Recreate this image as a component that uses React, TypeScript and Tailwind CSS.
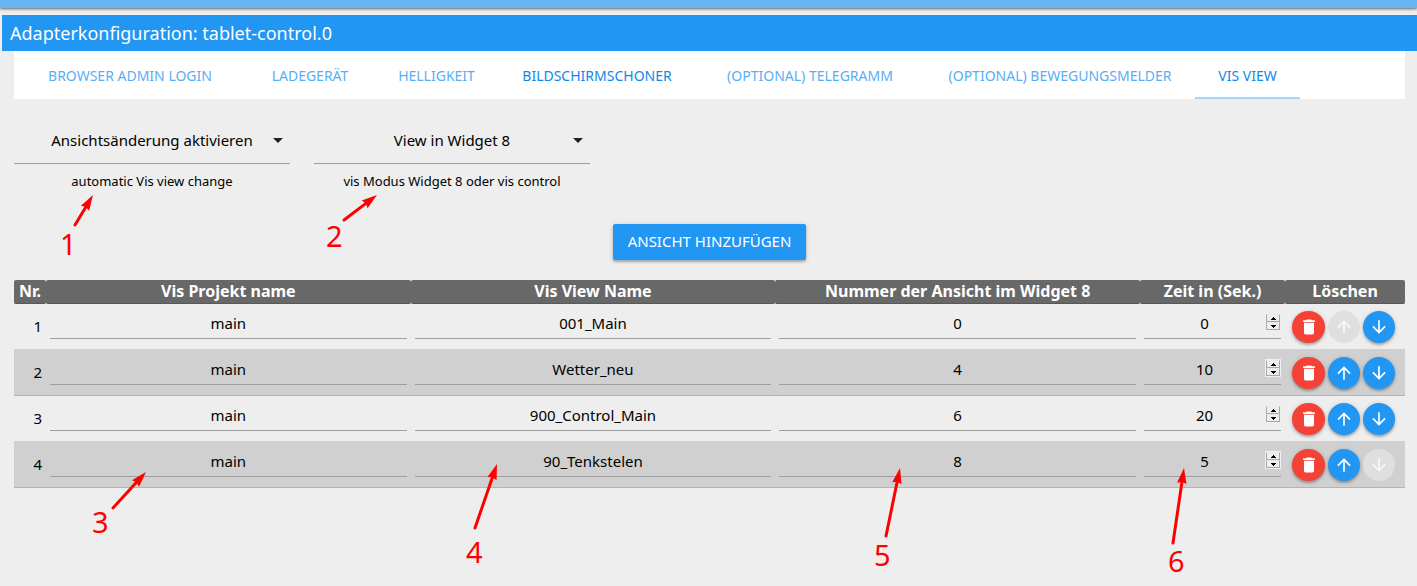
import React, { useState } from "react";

type Row = { id: number; project: string; view: string; widget: string; time: string };

const initialRows: Row[] = [
  { id: 1, project: "main", view: "001_Main", widget: "0", time: "0" },
  { id: 2, project: "main", view: "Wetter_neu", widget: "4", time: "10" },
  { id: 3, project: "main", view: "900_Control_Main", widget: "6", time: "20" },
  { id: 4, project: "main", view: "90_Tenkstelen", widget: "8", time: "5" },
];

const tabs = [
  { label: "Browser Admin Login", strong: false },
  { label: "Ladegerät", strong: false },
  { label: "Helligkeit", strong: false },
  { label: "Bildschirmschoner", strong: true },
  { label: "(optional) Telegramm", strong: false },
  { label: "(optional) Bewegungsmelder", strong: false },
  { label: "Vis View", strong: true },
];

const headings = ["Nr.", "Vis Projekt name", "Vis View Name", "Nummer der Ansicht im Widget 8", "Zeit in (Sek.)", "Löschen"];

const notes = [
  { n: "1", place: "left-[60px] top-[229px]", from: [75, 225], to: [93, 195] },
  { n: "2", place: "left-[326px] top-[221px]", from: [344, 220], to: [377, 195] },
  { n: "3", place: "left-[92px] top-[507px]", from: [113, 508], to: [146, 472] },
  { n: "4", place: "left-[466px] top-[537px]", from: [475, 528], to: [497, 464] },
  { n: "5", place: "left-[874px] top-[540px]", from: [886, 536], to: [900, 468] },
  { n: "6", place: "left-[1168px] top-[546px]", from: [1173, 543], to: [1184, 468] },
];

function Arrow({ from, to }: { from: number[]; to: number[] }) {
  const dx = to[0] - from[0];
  const dy = to[1] - from[1];
  const length = Math.hypot(dx, dy);
  const angle = (Math.atan2(dy, dx) * 180) / Math.PI;
  return (
    <g transform={`translate(${from[0]} ${from[1]}) rotate(${angle})`}>
      <path d={`M0 0H${length - 11}`} stroke="#ff0000" strokeWidth="3" strokeLinecap="round" />
      <path d={`M${length} 0l-15.5 -4.8l1.5 4.8l-1.5 4.8z`} fill="#ff0000" />
    </g>
  );
}

function SelectField({ id, value, other, label }: { id: string; value: string; other: string; label: string }) {
  return (
    <div className="w-[276px]">
      <div className="relative">
        <select
          id={id}
          className="block h-[46px] w-full appearance-none border-b border-[#9e9e9e] bg-transparent text-center text-[15px] text-black outline-none [text-align-last:center]"
        >
          <option>{value}</option>
          <option>{other}</option>
        </select>
        <svg className="pointer-events-none absolute right-0 top-[10px] size-6" viewBox="0 0 24 24" fill="#212121">
          <path d="M7 10l5 5 5-5z" />
        </svg>
      </div>
      <label htmlFor={id} className="mt-2 block text-center text-[13px] leading-[18px] text-black">
        {label}
      </label>
    </div>
  );
}

function TextCell({ label, value }: { label: string; value: string }) {
  return (
    <td className="px-1 pt-2 align-top">
      <input
        aria-label={label}
        defaultValue={value}
        className="block h-[27px] w-full border-b border-[#9e9e9e] bg-transparent pb-1 text-center text-[15px] text-black outline-none"
      />
    </td>
  );
}

function StepButton({ up, onClick }: { up?: boolean; onClick: () => void }) {
  return (
    <button
      type="button"
      aria-label={up ? "Wert erhöhen" : "Wert verringern"}
      onClick={onClick}
      className="flex h-2 w-full items-center justify-center border border-[#a8a8a8] border-t-[#e8e8e8] bg-[#eeeeee]"
    >
      <svg className="h-[3px] w-[5px] shrink-0" viewBox="0 0 5 3" fill="#000" shapeRendering="crispEdges">
        <path d={up ? "M2 0h1v1h1v1h1v1H0V2h1V1h1z" : "M0 0h5v1H4v1H3v1H2V2H1V1H0z"} />
      </svg>
    </button>
  );
}

function NumberCell({ value }: { value: string }) {
  const [v, setV] = useState(value);
  return (
    <td className="px-1 pt-2 align-top">
      <div className="flex h-[27px] border-b border-[#9e9e9e]">
        <input
          type="number"
          aria-label="Zeit in (Sek.)"
          value={v}
          onChange={(e) => setV(e.target.value)}
          className="min-w-0 flex-1 appearance-none bg-transparent pb-1 text-center text-[15px] text-black outline-none [-moz-appearance:textfield] [&::-webkit-inner-spin-button]:appearance-none [&::-webkit-outer-spin-button]:appearance-none"
        />
        <span className="mt-px flex h-[18px] w-4 flex-col bg-[#f0f0f0] p-px">
          <StepButton up onClick={() => setV(String(Number(v) + 1))} />
          <StepButton onClick={() => setV(String(Number(v) - 1))} />
        </span>
      </div>
    </td>
  );
}

const paths = {
  trash: "M6 19c0 1.1.9 2 2 2h8c1.1 0 2-.9 2-2V7H6v12zM19 4h-3.5l-1-1h-5l-1 1H5v2h14V4z",
  up: "M4 12l1.41 1.41L11 7.83V20h2V7.83l5.58 5.59L20 12l-8-8-8 8z",
  down: "M20 12l-1.41-1.41L13 16.17V4h-2v12.17l-5.58-5.59L4 12l8 8 8-8z",
};

function RoundButton({ icon, label, disabled, onClick }: { icon: keyof typeof paths; label: string; disabled?: boolean; onClick: () => void }) {
  const tone = disabled
    ? "w-8 bg-[#dfdfdf]"
    : icon === "trash"
      ? "w-[33px] bg-[#f44336] shadow-[0_2px_2px_rgba(0,0,0,0.2),0_1px_5px_rgba(0,0,0,0.18)]"
      : "w-8 bg-[#2196f3] shadow-[0_2px_2px_rgba(0,0,0,0.2),0_1px_5px_rgba(0,0,0,0.18)]";
  return (
    <button type="button" aria-label={label} disabled={disabled} onClick={onClick} className={`flex h-8 items-center justify-center rounded-full ${tone}`}>
      <svg className="size-5" viewBox="0 0 24 24" fill={disabled ? "#f8f8f8" : "#ffffff"}>
        <path d={paths[icon]} />
      </svg>
    </button>
  );
}

export default function App() {
  const [rows, setRows] = useState(initialRows);
  const move = (i: number, d: number) => {
    const next = [...rows];
    [next[i], next[i + d]] = [next[i + d], next[i]];
    setRows(next);
  };

  return (
    <div className="relative min-h-screen overflow-hidden bg-[#eeeeee] font-['Noto_Sans',sans-serif] text-black">
      <div className="h-2 bg-[#64b5f6] shadow-[0_1px_3px_rgba(0,0,0,0.6)]" />
      <header className="ml-[2px] mt-[7px] flex h-9 items-center bg-[#2196f3] pl-2">
        <h1 className="text-[18px] text-white">Adapterkonfiguration: tablet-control.0</h1>
      </header>

      <main className="ml-[14px] mr-3">
        <nav className="grid h-12 grid-cols-[232fr_128fr_125fr_196fr_230fr_270fr_105fr_105fr] bg-white">
          {tabs.map((t, i) => (
            <a
              key={t.label}
              href={`#tab-${i}`}
              className={`flex items-center justify-center whitespace-nowrap border-b-2 pt-[2px] text-[14px] uppercase ${
                t.strong ? "text-[#1088ea]" : "text-[#58aef4]"
              } ${i === 6 ? "border-[#a6d5fa]" : "border-transparent"}`}
            >
              {t.label}
            </a>
          ))}
        </nav>

        <section className="mt-[19px] flex gap-6">
          <SelectField id="auto" value="Ansichtsänderung aktivieren" other="Ansichtsänderung deaktivieren" label="automatic Vis view change" />
          <SelectField id="mode" value="View in Widget 8" other="vis control" label="vis Modus Widget 8 oder vis control" />
        </section>

        <div className="mt-[34px] flex justify-center">
          <button
            type="button"
            onClick={() => setRows([...rows, { id: Date.now(), project: "main", view: "", widget: "0", time: "0" }])}
            className="h-9 rounded-[2px] bg-[#2196f3] px-[15px] pb-px text-[15px] text-white shadow-[0_2px_2px_rgba(0,0,0,0.2),0_1px_5px_rgba(0,0,0,0.18)]"
          >
            ANSICHT HINZUFÜGEN
          </button>
        </div>

        <table className="mt-5 w-full table-fixed border-separate border-spacing-0">
          <colgroup>
            <col className="w-8" />
            <col />
            <col />
            <col />
            <col className="w-[145px]" />
            <col className="w-[120px]" />
          </colgroup>
          <thead>
            <tr>
              {headings.map((h) => (
                <th key={h} className="h-6 whitespace-nowrap rounded-[2px] border-b border-[#595757] bg-[#686868] p-0 text-[16px] leading-[23px] font-bold text-white">
                  {h}
                </th>
              ))}
            </tr>
          </thead>
          <tbody>
            {rows.map((r, i) => (
              <tr
                key={r.id}
                className="even:bg-[#d0d0d0] even:[&>td]:border-y even:[&>td]:border-t-[#d0d0d0] even:[&>td]:border-b-[#b4b4b4]"
              >
                <td className="pr-1 pt-[11px] text-right align-top text-[15px] leading-[22px]">{i + 1}</td>
                <TextCell label="Vis Projekt name" value={r.project} />
                <TextCell label="Vis View Name" value={r.view} />
                <TextCell label="Nummer der Ansicht im Widget 8" value={r.widget} />
                <NumberCell value={r.time} />
                <td className="pb-[6px] pl-[7px] pt-[7px]">
                  <div className="flex gap-[3px]">
                    <RoundButton icon="trash" label="Löschen" onClick={() => setRows(rows.filter((x) => x.id !== r.id))} />
                    <RoundButton icon="up" label="Nach oben" disabled={i === 0} onClick={() => move(i, -1)} />
                    <RoundButton icon="down" label="Nach unten" disabled={i === rows.length - 1} onClick={() => move(i, 1)} />
                  </div>
                </td>
              </tr>
            ))}
          </tbody>
        </table>
      </main>

      <svg className="pointer-events-none absolute left-0 top-0 h-[586px] w-[1417px]" viewBox="0 0 1417 586">
        {notes.map((a) => (
          <Arrow key={a.n} from={a.from} to={a.to} />
        ))}
      </svg>
      {notes.map((a) => (
        <span key={a.n} className={`pointer-events-none absolute text-[29px] leading-[30px] text-[#ff0000] ${a.place}`}>
          {a.n}
        </span>
      ))}
    </div>
  );
}
